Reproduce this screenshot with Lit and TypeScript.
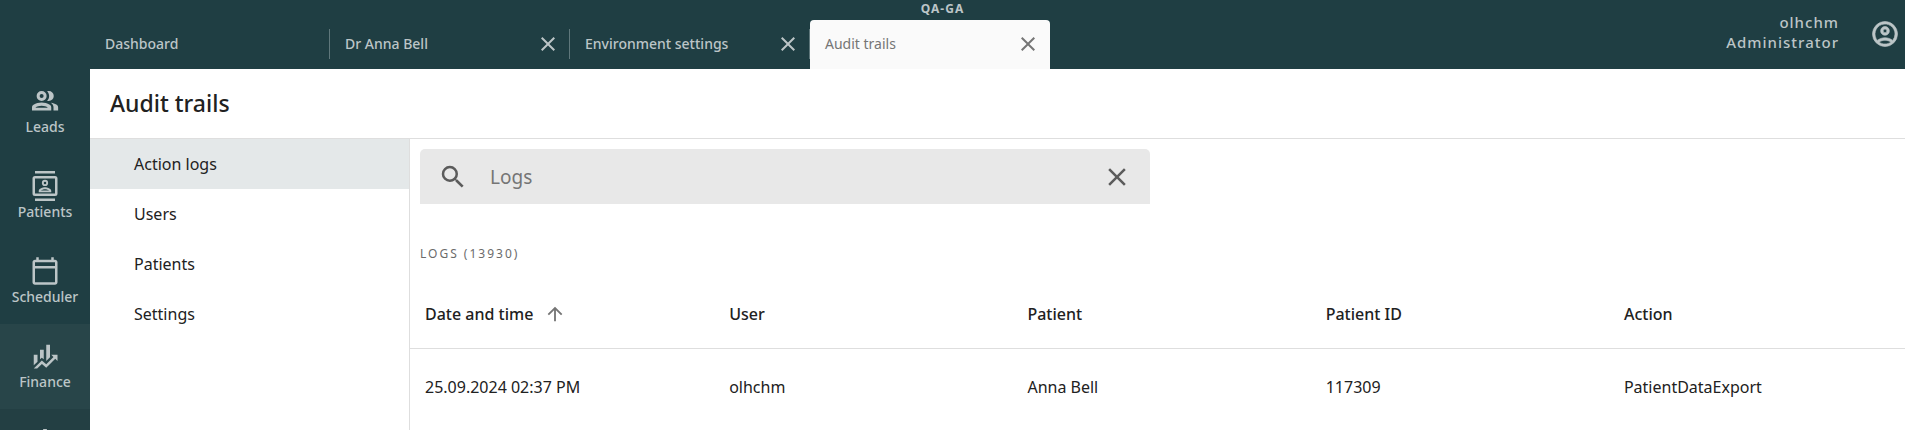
import { LitElement, html, css, svg } from "lit";
import { customElement, property, state } from "lit/decorators.js";
import { classMap } from "lit/directives/class-map.js";

const icons = {
  leads: svg`<path fill-rule="evenodd" d="M9.300 4a4 4 0 1 0 0 8 4 4 0 0 0 0-8Zm0 2.400a1.600 1.600 0 1 1 0 3.200 1.600 1.600 0 0 1 0-3.200ZM1.600 19.500v-2.300c0-1 .5-1.750 1.200-2.150 2-1.150 4.200-1.850 6.500-1.850s4.500.7 6.500 1.850c.7.4 1.200 1.150 1.200 2.150v2.300Zm2.700-2.200h10c-1.200-.9-3-1.500-5-1.500s-3.800.6-5 1.500Z"/><path d="M13.700 11.900c1-1 1.600-2.400 1.600-3.900s-.6-2.900-1.600-3.900c.4-.1.900-.1 1.300-.1a4 4 0 0 1 0 8c-.4 0-.9 0-1.300-.1ZM18.800 19.500v-2.500c0-1.500-.8-2.700-2.100-3.700 1.800.3 3.200.8 4.300 1.400 1 .6 1.500 1.400 1.500 2.400v2.400Z"/>`,
  patients: svg`<path d="M20 0H4v2h16V0ZM4 24h16v-2H4v2ZM20 4H4a2 2 0 0 0-2 2v12a2 2 0 0 0 2 2h16a2 2 0 0 0 2-2V6a2 2 0 0 0-2-2Zm0 14H4V6h16v12Zm-8-6a2.500 2.500 0 1 0 0-5 2.500 2.500 0 0 0 0 5Zm0-3.500a1 1 0 1 1 0 2 1 1 0 0 1 0-2Zm5 7.490C17 13.900 13.690 13 12 13s-5 .9-5 2.990V17h10v-1.010Zm-8.190-.490c.61-.52 2.030-1 3.190-1 1.170 0 2.590.480 3.200 1H8.810Z"/>`,
  scheduler: svg`<path d="M20 3h-1V1h-2v2H7V1H5v2H4c-1.100 0-2 .9-2 2v16c0 1.100.9 2 2 2h16c1.100 0 2-.9 2-2V5c0-1.100-.9-2-2-2Zm0 18H4V10h16v11Zm0-13H4V5h16v3Z"/>`,
  finance: svg`<path d="M6 16.500 3 19.440V11h3v5.500Zm5-1.840-1.570-1.340L8 14.640V7h3v7.660ZM16 13l-3 3V3h3v10Zm2.810-.190L17 11h5v5l-1.790-1.790L13 21.360l-3.470-3.020L5.750 22H3l6.470-6.340L13 18.640l5.810-5.830Z"/>`,
  reports: svg`<path d="M10.500 2.400h3V6H20v16H4V6h6.500Z"/>`,
  account: svg`<path d="M12 2a10 10 0 1 0 0 20 10 10 0 0 0 0-20ZM7.350 18.500C8.660 17.560 10.260 17 12 17s3.340.56 4.650 1.500C15.340 19.440 13.740 20 12 20s-3.340-.56-4.650-1.500Zm10.790-1.380C16.450 15.800 14.320 15 12 15s-4.450.8-6.140 2.120A8 8 0 1 1 20 12a7.950 7.950 0 0 1-1.860 5.120ZM12 6a3.500 3.500 0 1 0 0 7 3.500 3.500 0 0 0 0-7Zm0 5a1.500 1.500 0 1 1 0-3 1.500 1.500 0 0 1 0 3Z" stroke="currentColor" stroke-width=".5"/>`,
  close: svg`<path d="M19 6.410 17.590 5 12 10.590 6.410 5 5 6.410 10.590 12 5 17.590 6.410 19 12 13.410 17.590 19 19 17.590 13.410 12Z"/>`,
  search: svg`<path d="M15.500 14h-.79l-.28-.27A6.470 6.470 0 0 0 16 9.500 6.500 6.500 0 1 0 9.500 16c1.610 0 3.090-.59 4.230-1.570l.27.28v.79l5 4.990L20.490 19l-4.990-5Zm-6 0a4.500 4.500 0 1 1 0-9 4.500 4.500 0 0 1 0 9Z"/>`,
  up: svg`<path d="m4 12 1.410 1.410L11 7.830V20h2V7.830l5.580 5.590L20 12l-8-8-8 8Z"/>`,
};
type IconName = keyof typeof icons;

@customElement("app-icon")
export class AppIcon extends LitElement {
  @property() name: IconName = "close";
  @property({ type: Number }) size = 24;

  static styles = css`
    :host { display: inline-flex; flex: none; }
    svg { display: block; fill: currentColor; overflow: visible; }
  `;

  render() {
    return html`<svg width=${this.size} height=${this.size} viewBox="0 0 24 24" aria-hidden="true">${icons[this.name]}</svg>`;
  }
}

@customElement("app-root")
export class AppRoot extends LitElement {
  @state() private section = "Action logs";

  private tabs = ["Dashboard", "Dr Anna Bell", "Environment settings", "Audit trails"];
  private modules: { icon: IconName; label: string }[] = [
    { icon: "leads", label: "Leads" },
    { icon: "patients", label: "Patients" },
    { icon: "scheduler", label: "Scheduler" },
    { icon: "finance", label: "Finance" },
    { icon: "reports", label: "" },
  ];
  private sections = ["Action logs", "Users", "Patients", "Settings"];
  private columns = ["User", "Patient", "Patient ID", "Action"];
  private rows = [["25.09.2024 02:37 PM", "olhchm", "Anna Bell", "117309", "PatientDataExport"]];

  static styles = css`
    :host {
      display: grid;
      grid-template: auto 1fr / 90px 1fr;
      height: 100vh;
      overflow: hidden;
      background: #fff;
      color: #212121;
      font: 16px/24px "Noto Sans", sans-serif;
    }
    * { box-sizing: border-box; }
    button { border: 0; padding: 0; background: none; color: inherit; font: inherit; cursor: pointer; }
    a { color: inherit; text-decoration: none; }

    .top {
      grid-column: 1 / -1;
      position: relative;
      display: flex;
      align-items: flex-end;
      justify-content: space-between;
      height: 69px;
      padding-left: 90px;
      background: #1f3e43;
      color: #bcc5c7;
    }
    .env {
      position: absolute;
      top: 0;
      left: 0;
      right: 0;
      padding-right: 20px;
      text-align: center;
      font-size: 12px;
      line-height: 18px;
      font-weight: 700;
      letter-spacing: 1px;
    }
    .tabs { display: flex; }
    .tab {
      display: flex;
      align-items: center;
      justify-content: space-between;
      width: 240px;
      height: 49px;
      padding: 0 10px 2px 15px;
      font-size: 14px;
      font-weight: 500;
      border-radius: 4px 4px 0 0;
      position: relative;
    }
    .tab + .tab::before {
      content: "";
      position: absolute;
      left: -1px;
      top: 9px;
      height: 30px;
      border-left: 1px solid #5f777b;
    }
    .tab.current { background: #fafafa; color: #757575; font-weight: 400; }
    .tab button { display: flex; }
    .user { display: flex; align-items: center; gap: 31px; height: 69px; padding: 0 5px 2px 0; }
    .who { padding-bottom: 4px; font-size: 15px; font-weight: 500; line-height: 20px; text-align: right; letter-spacing: 1px; }
    .account { display: flex; }

    .rail { background: #1f3e43; color: #bcc5c7; overflow: hidden; }
    .module {
      display: flex;
      flex-direction: column;
      align-items: center;
      justify-content: flex-end;
      height: 85px;
      padding-bottom: 16px;
      font-size: 14px;
      font-weight: 500;
      line-height: 22px;
    }
    .label { height: 22px; }
    .module.tint { background: #284549; }
    .module.last { background: #233f43; }

    .page { display: grid; grid-template: auto 1fr / 320px 1fr; min-width: 0; min-height: 0; }
    h1 {
      grid-column: 1 / -1;
      margin: 0;
      padding: 18px 20px 19px;
      border-bottom: 1px solid #dedede;
      font-size: 23px;
      line-height: 32px;
      font-weight: 500;
    }
    .sections { border-right: 1px solid #dedede; }
    .sections button { display: block; width: 100%; height: 50px; padding-left: 44px; text-align: left; }
    .sections .current { background: #e4e8e9; }
    .content { min-width: 0; padding-top: 10px; }
    .search {
      display: flex;
      align-items: center;
      width: calc(50% - 18px);
      min-width: 300px;
      height: 55px;
      margin-left: 10px;
      padding: 0 18px;
      gap: 22px;
      background: #e8e8e8;
      border-radius: 5px 5px 0 0;
      color: #5b5b5b;
    }
    .search input {
      flex: 1;
      min-width: 0;
      border: 0;
      padding: 0;
      outline: 0;
      background: none;
      color: #757575;
      font: inherit;
      font-size: 19px;
    }
    .search input::placeholder { color: #757575; opacity: 1; }
    .search label, .search button { display: flex; }
    h2 {
      margin: 40px 0 0 10px;
      font-size: 12px;
      line-height: 20px;
      font-weight: 400;
      letter-spacing: 2px;
      color: #6b6b6b;
      text-transform: uppercase;
    }
    table { width: 100%; margin-top: 17px; table-layout: fixed; border-collapse: collapse; }
    th, td { padding: 0; text-align: left; white-space: nowrap; }
    th { height: 67px; border-bottom: 1px solid #dedede; font-weight: 500; }
    td { height: 77px; }
    th:first-child, td:first-child { width: 21.35%; padding-left: 15px; }
    th:not(:first-child):not(:last-child) { width: 19.95%; }
    .sort { display: inline-flex; align-items: center; gap: 11px; }
    .sort app-icon { color: #757575; }
  `;

  render() {
    return html`
      <header class="top">
        <div class="env">QA-GA</div>
        <nav class="tabs">
          ${this.tabs.map(
            (t, i) => html`<div class=${classMap({ tab: true, current: i === 3 })}>
              <a href="#">${t}</a>
              ${i ? html`<button aria-label="Close ${t}"><app-icon name="close" size="24"></app-icon></button>` : ""}
            </div>`
          )}
        </nav>
        <div class="user">
          <div class="who"><div>olhchm</div><div>Administrator</div></div>
          <button class="account" aria-label="Account"><app-icon name="account" size="30"></app-icon></button>
        </div>
      </header>
      <nav class="rail">
        ${this.modules.map(
          (m, i) => html`<a href="#" class=${classMap({ module: true, tint: i === 3, last: i === 4 })}>
            <app-icon name=${m.icon} size="30"></app-icon><span class="label">${m.label}</span>
          </a>`
        )}
      </nav>
      <main class="page">
        <h1>Audit trails</h1>
        <nav class="sections">
          ${this.sections.map(
            (s) => html`<button class=${classMap({ current: s === this.section })} @click=${() => (this.section = s)}>${s}</button>`
          )}
        </nav>
        <section class="content">
          <div class="search">
            <label for="q"><app-icon name="search" size="30"></app-icon></label>
            <input id="q" type="text" placeholder="Logs" aria-label="Search logs" />
            <button aria-label="Clear search"><app-icon name="close" size="30"></app-icon></button>
          </div>
          <h2>Logs (13930)</h2>
          <table>
            <thead>
              <tr>
                <th><button class="sort">Date and time <app-icon name="up" size="22"></app-icon></button></th>
                ${this.columns.map((c) => html`<th>${c}</th>`)}
              </tr>
            </thead>
            <tbody>
              ${this.rows.map((r) => html`<tr>${r.map((c) => html`<td>${c}</td>`)}</tr>`)}
            </tbody>
          </table>
        </section>
      </main>
    `;
  }
}
